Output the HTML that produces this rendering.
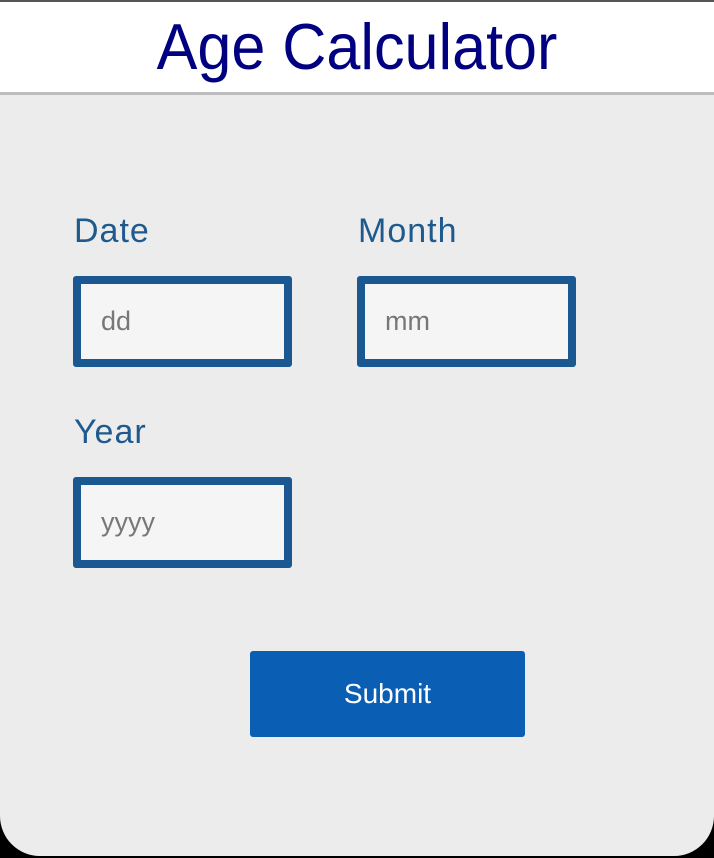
<!DOCTYPE html>
<html><head><style>
html,body{margin:0;padding:0;background:#000;width:714px;height:858px;overflow:hidden}
body{position:relative;font-family:"Liberation Sans",sans-serif}
#page{position:absolute;left:0;top:0;width:714px;height:856px;background:#ececec;border-radius:0 0 40px 40px;overflow:hidden}
#topline{position:absolute;left:0;top:0;width:714px;height:2px;background:#555}
#hdr{position:absolute;left:0;top:2px;width:714px;height:90px;background:#fff;border-bottom:3px solid #bdbdbd}
#hdr div{position:absolute;left:0;right:0;top:7px;text-align:center;font-size:65px;color:#000080;transform:scaleX(0.94);transform-origin:357px 0}
.lbl{position:absolute;font-size:34px;color:#1e5a8e;letter-spacing:1px}
.box{position:absolute;width:203px;height:75px;border:8px solid #1b5891;border-radius:3px;background:#f5f5f5}
.box span{position:absolute;left:20px;top:22px;font-size:27px;color:#777}
#btn{position:absolute;left:250px;top:651px;width:275px;height:86px;background:#0a5fb4;border-radius:3px;color:#fff;font-size:28px;text-align:center;line-height:86px}
</style></head><body>
<div id="page">
<div id="topline"></div>
<div id="hdr"><div>Age Calculator</div></div>
<div class="lbl" style="left:74px;top:212px">Date</div>
<div class="lbl" style="left:358px;top:212px">Month</div>
<div class="box" style="left:73px;top:276px"><span>dd</span></div>
<div class="box" style="left:357px;top:276px"><span>mm</span></div>
<div class="lbl" style="left:74px;top:413px">Year</div>
<div class="box" style="left:73px;top:477px"><span>yyyy</span></div>
<div id="btn">Submit</div>
</div>
</body></html>
